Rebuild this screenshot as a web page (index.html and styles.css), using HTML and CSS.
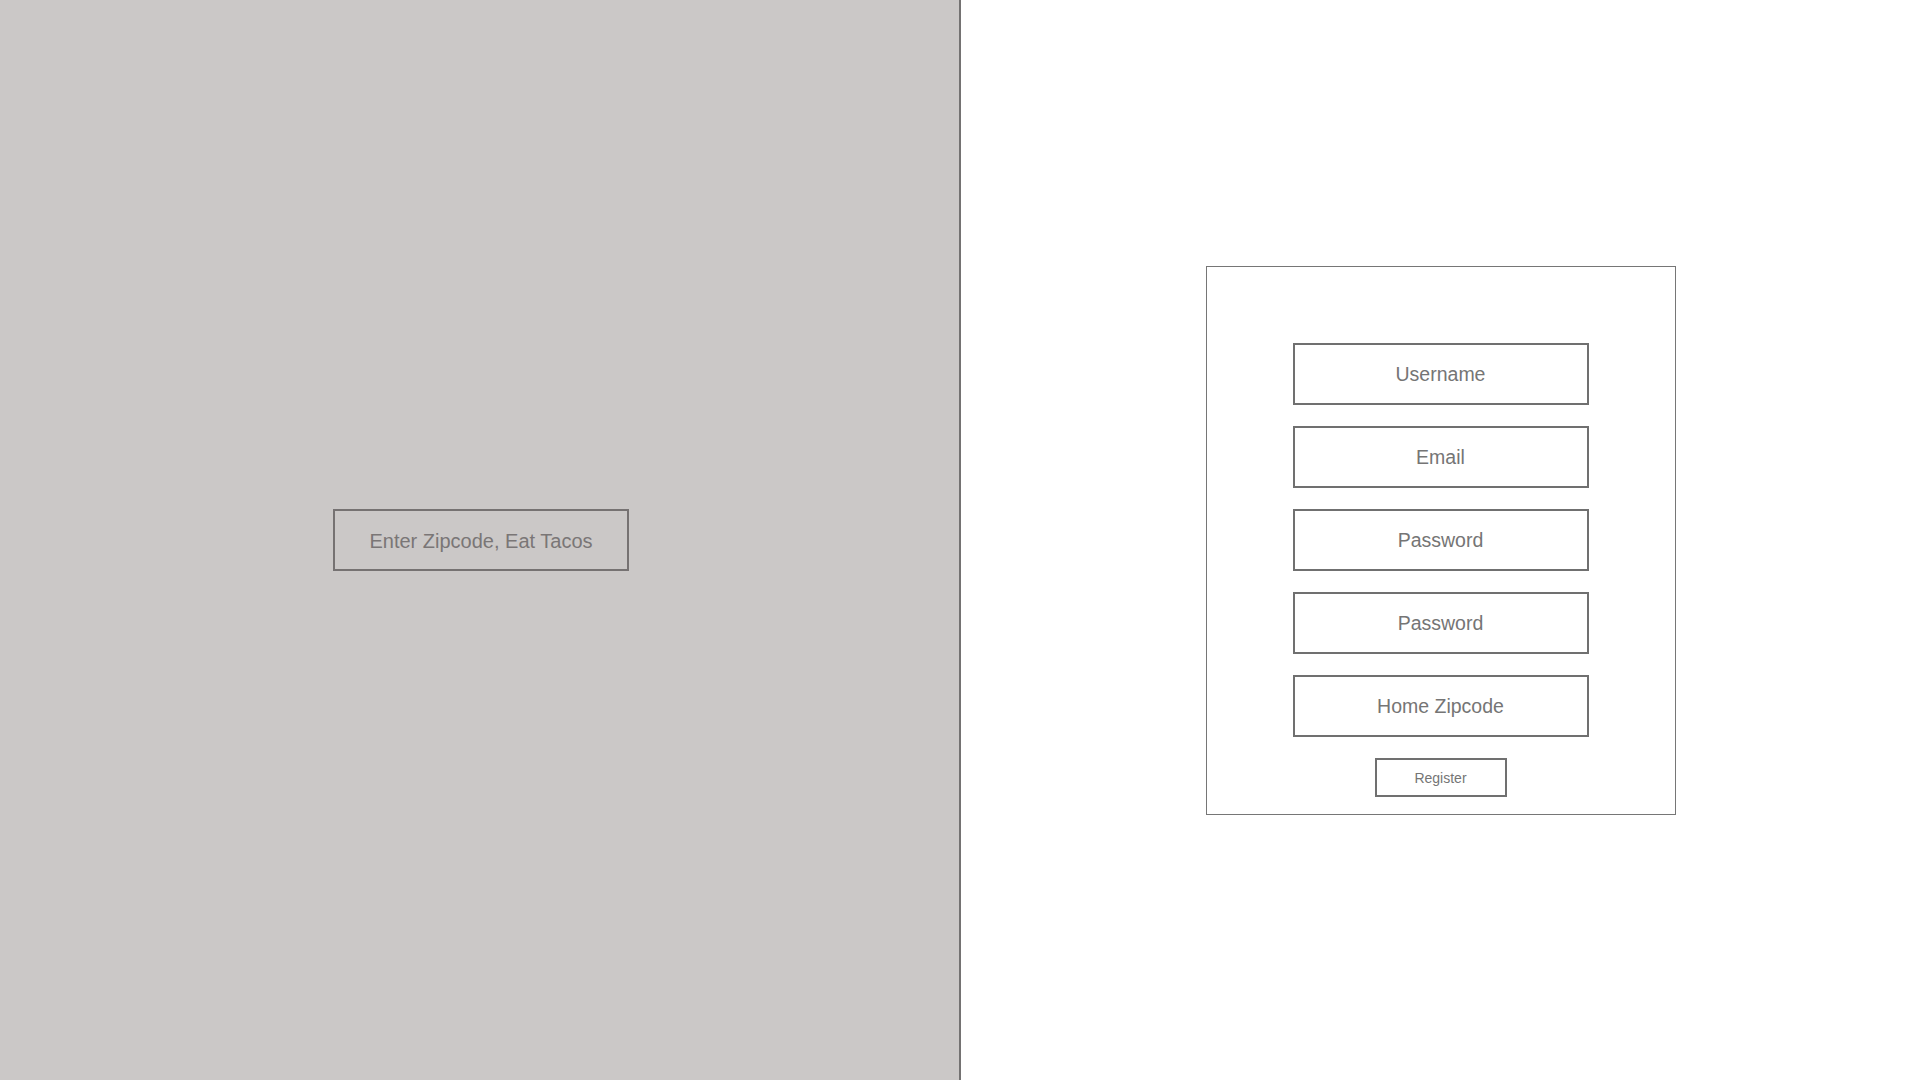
FILE: index.html
```html
<!DOCTYPE html>
<html lang="en">
<head>
<meta charset="utf-8">
<title>Tacos</title>
<link rel="stylesheet" href="styles.css">
</head>
<body>
<div class="page">
  <section class="left">
    <div class="zip-box">Enter Zipcode, Eat Tacos</div>
  </section>
  <section class="right">
    <form class="register-form">
      <div class="field">Username</div>
      <div class="field">Email</div>
      <div class="field">Password</div>
      <div class="field">Password</div>
      <div class="field">Home Zipcode</div>
      <div class="register-btn">Register</div>
    </form>
  </section>
</div>
</body>
</html>
```
FILE: styles.css
```css
html, body {
  margin: 0;
  padding: 0;
  height: 100%;
}
body {
  font-family: "Liberation Sans", Arial, Helvetica, sans-serif;
  background: #ffffff;
}
.page {
  display: flex;
  height: 100vh;
}
.left {
  width: 959px;
  flex: none;
  background: #cbc8c7;
  border-right: 2px solid #747272;
  display: flex;
  align-items: center;
  justify-content: center;
}
.zip-box {
  box-sizing: border-box;
  width: 296px;
  height: 62px;
  padding-top: 2px;
  border: 2px solid #767272;
  display: flex;
  align-items: center;
  justify-content: center;
  font-size: 20px;
  color: #7a7676;
  margin-left: 3px;
}
.right {
  flex: 1;
  display: flex;
  align-items: center;
  justify-content: center;
}
.register-form {
  box-sizing: border-box;
  width: 470px;
  height: 549px;
  border: 1px solid #767676;
  margin: 0;
  padding: 76px 0 17px;
  display: flex;
  flex-direction: column;
  align-items: center;
  gap: 21px;
}
.field {
  box-sizing: border-box;
  width: 296px;
  height: 62px;
  padding-top: 2px;
  flex: none;
  border: 2px solid #707070;
  display: flex;
  align-items: center;
  justify-content: center;
  font-size: 19.5px;
  color: #757575;
}
.register-btn {
  box-sizing: border-box;
  width: 132px;
  height: 39px;
  padding-top: 1px;
  flex: none;
  border: 2px solid #707070;
  display: flex;
  align-items: center;
  justify-content: center;
  font-size: 14px;
  color: #757575;
}
```
